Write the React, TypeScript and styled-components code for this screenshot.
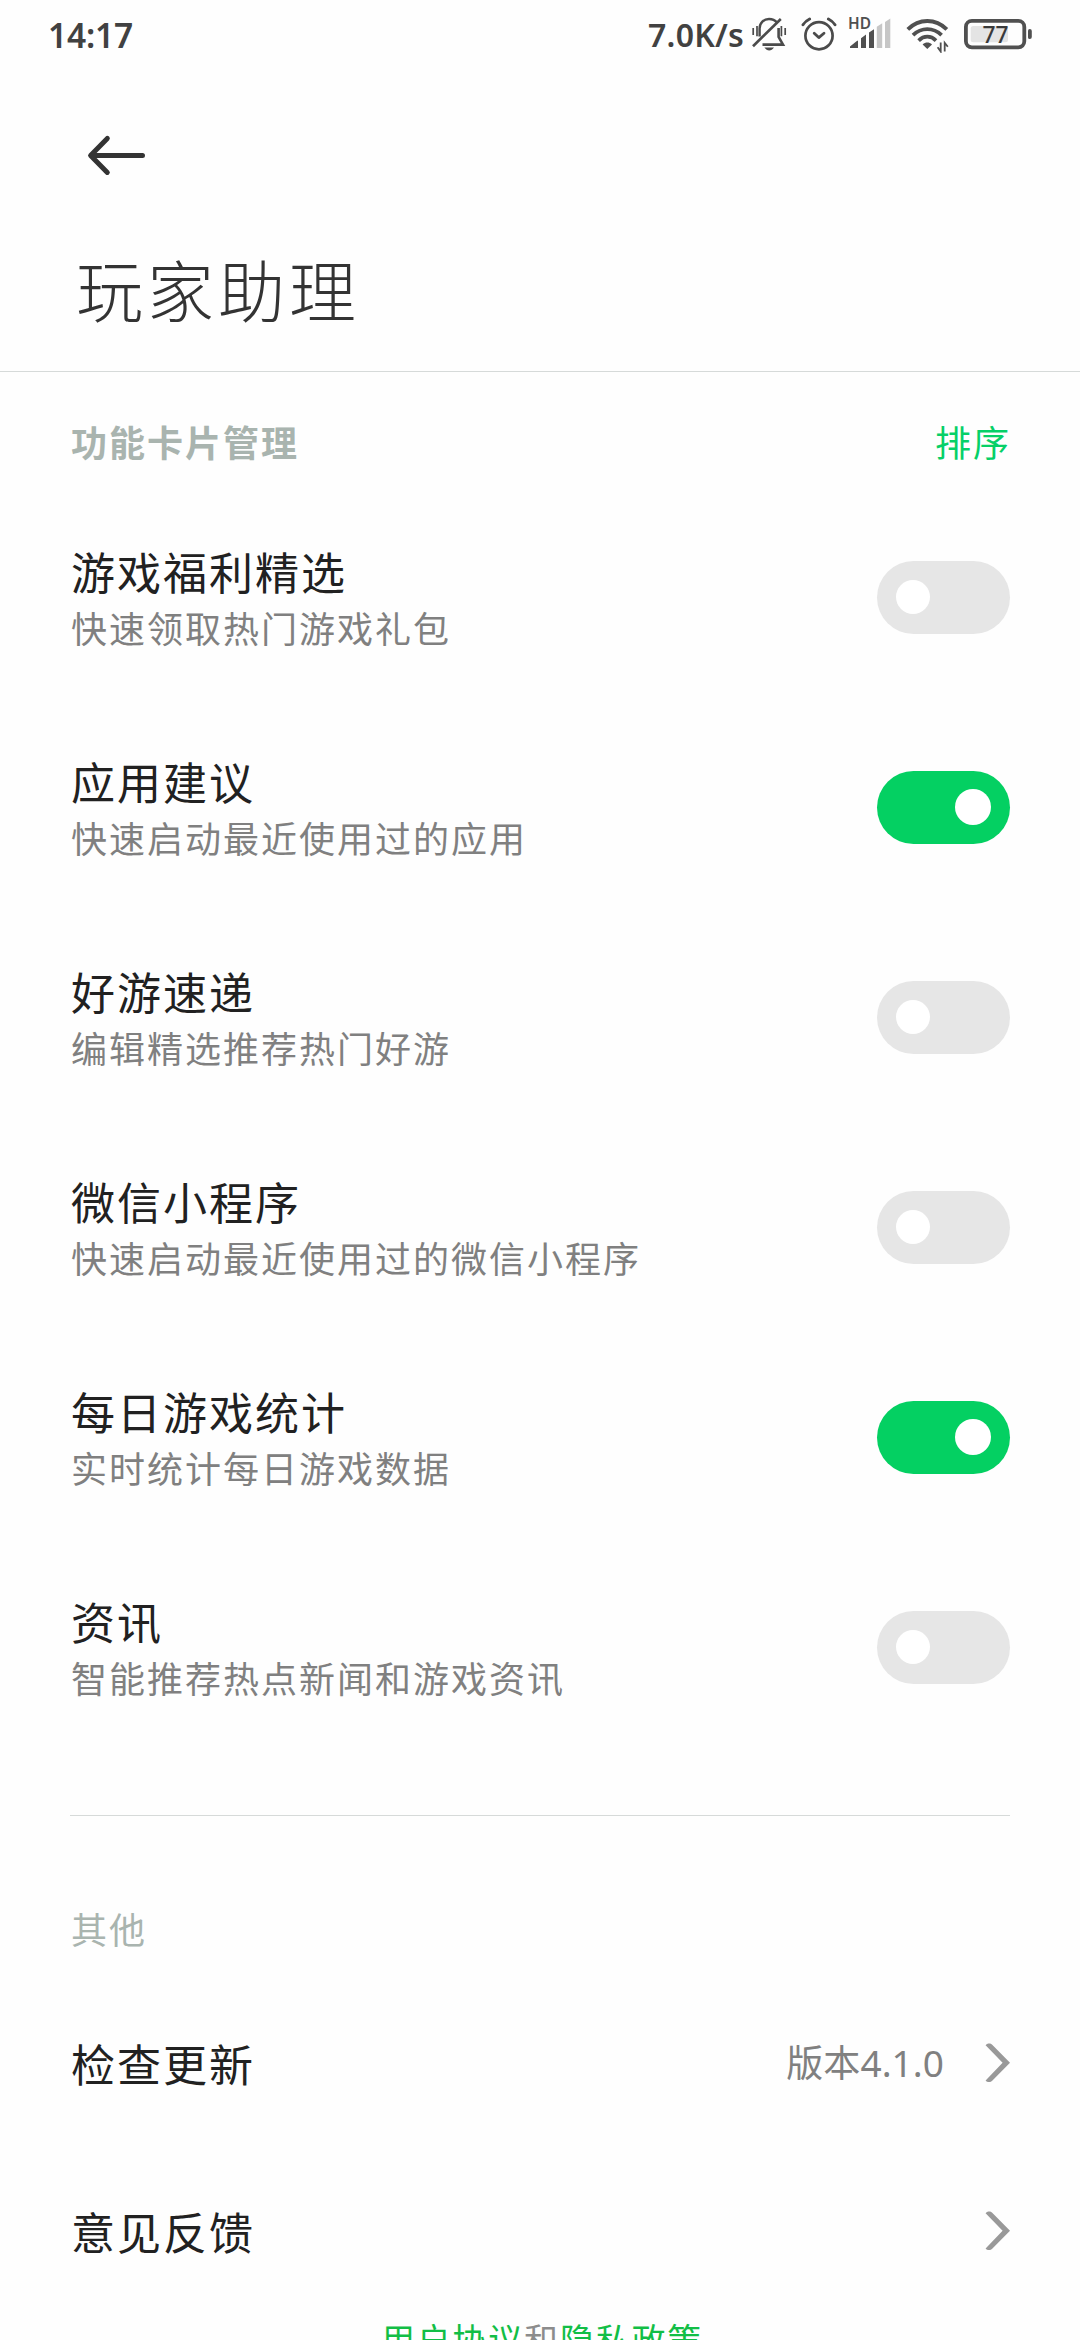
import React, { useState } from "react";
import styled, { createGlobalStyle } from "styled-components";

const GlobalStyle = createGlobalStyle`
  * { box-sizing: border-box; }
  body {
    margin: 0;
    background: #fefefe;
    font-family: "Noto Sans", "Noto Sans CJK SC", sans-serif;
  }
`;

const Screen = styled.div`
  display: flex;
  flex-direction: column;
  width: 1080px;
  height: 2340px;
  overflow: hidden;
  background: #fefefe;

  > * {
    flex: none;
  }
`;

const StatusBar = styled.header`
  display: flex;
  align-items: center;
  justify-content: space-between;
  height: 70px;
  padding: 0 48px 0 48px;
  color: #414141;
`;

const Clock = styled.span`
  padding-bottom: 1px;
  font-size: 33.5px;
  font-weight: 600;
  line-height: 68px;
  letter-spacing: -0.2px;
`;

const StatusRight = styled.div`
  display: flex;
  align-items: center;
`;

const NetSpeed = styled.span`
  margin-right: 7px;
  padding-bottom: 1px;
  font-size: 32px;
  font-weight: 600;
  line-height: 68px;
  letter-spacing: 0.2px;
`;

const StatusIcon = styled.svg<{ $gap?: number }>`
  display: block;
  flex: none;
  margin-right: ${(p) => p.$gap ?? 0}px;
`;

const SvgLabel = styled.text<{ $size: number; $weight: number }>`
  font-family: "Noto Sans", sans-serif;
  font-size: ${(p) => p.$size}px;
  font-weight: ${(p) => p.$weight};
`;

const TitleBar = styled.div`
  display: flex;
  flex-direction: column;
  height: 302px;
  padding: 62px 76px 0;
  border-bottom: 1px solid #d6dad9;
`;

const BackButton = styled.button`
  display: flex;
  width: 80px;
  height: 46px;
  padding: 0 0 0 10px;
  border: 0;
  background: none;
`;

const PageTitle = styled.h1`
  margin: 60px 0 0;
  font-family: "Noto Sans CJK SC", sans-serif;
  font-size: 67px;
  font-weight: 300;
  line-height: 100px;
  letter-spacing: 4px;
  color: #333;
`;

const Section = styled.section`
  display: flex;
  flex-direction: column;
  padding: 0 70px;
`;

const SectionHead = styled.div<{ $height: number; $top: number }>`
  display: flex;
  align-items: center;
  justify-content: space-between;
  height: ${(p) => p.$height}px;
  padding: ${(p) => p.$top}px 0 0 1px;
`;

const SectionLabel = styled.h2<{ $bold?: boolean }>`
  margin: 0;
  font-family: "Noto Sans CJK SC", sans-serif;
  font-size: 36px;
  font-weight: ${(p) => (p.$bold ? 700 : 400)};
  line-height: 54px;
  letter-spacing: 2px;
  color: #a9b4af;
`;

const SortLink = styled.button`
  padding: 0;
  border: 0;
  background: none;
  font-family: "Noto Sans CJK SC", sans-serif;
  font-size: 36px;
  line-height: 54px;
  letter-spacing: 2px;
  margin-right: -1px;
  color: #06d068;
`;

const SettingRow = styled.div`
  display: flex;
  align-items: center;
  justify-content: space-between;
  height: 210px;
  padding-left: 1px;
`;

const RowText = styled.div`
  display: flex;
  flex-direction: column;
  padding-top: 3px;
  font-family: "Noto Sans CJK SC", sans-serif;
`;

const RowTitle = styled.span`
  font-family: "Noto Sans CJK SC", sans-serif;
  font-size: 44px;
  line-height: 56px;
  letter-spacing: 2px;
  color: #212121;
`;

const RowHint = styled.span`
  font-size: 36px;
  line-height: 56px;
  letter-spacing: 2px;
  color: #808080;
`;

const Toggle = styled.button<{ $on: boolean }>`
  display: flex;
  align-items: center;
  justify-content: ${(p) => (p.$on ? "flex-end" : "flex-start")};
  width: 133px;
  height: 73px;
  padding: 0 19px;
  border: 0;
  border-radius: 37px;
  background: ${(p) => (p.$on ? "#04d062" : "#e6e6e6")};
`;

const Knob = styled.span<{ $on: boolean }>`
  width: ${(p) => (p.$on ? 36 : 34)}px;
  height: ${(p) => (p.$on ? 36 : 34)}px;
  border-radius: 50%;
  background: #fff;
`;

const Divider = styled.hr`
  width: 940px;
  height: 1px;
  margin: 63px 0 0;
  border: 0;
  background: #d6dad9;
`;

const LinkRow = styled.div`
  display: flex;
  align-items: center;
  justify-content: space-between;
  height: 168px;
  padding-left: 1px;
`;

const LinkEnd = styled.div`
  display: flex;
  align-items: center;
  gap: 40px;
`;

const Version = styled.span`
  font-size: 37px;
  line-height: 54px;
  letter-spacing: 0.05px;
  color: #808080;
`;

const Footer = styled.footer`
  display: flex;
  justify-content: center;
  padding-left: 4px;
  font-family: "Noto Sans CJK SC", sans-serif;
  font-size: 34px;
  line-height: 48px;
  letter-spacing: 1.8px;
  color: #8c8c8c;
`;

const Policy = styled.a`
  color: #12be46;
`;

const BellOff = () => (
  <StatusIcon width="36" height="36" viewBox="750 17 36 36" fill="none" stroke="#4b4b4b" $gap={14}>
    <path d="M758.6 36.5V28.5C758.6 22.8 762.8 19 768 19C771.4 19 774.2 20.4 776 22.6" strokeWidth="2.4" />
    <path d="M777.6 28V37L782 44.6H761.5" strokeWidth="2.6" />
    <path d="M752 46.2L779.8 19" strokeWidth="2.6" />
    <path d="M752.2 28V35M756 26V36.2M780.4 26V36.2M784.2 28V35" strokeWidth="1.7" />
    <path d="M763.4 47.5H773C771.6 49.6 770 50.4 768.2 50.4C766.4 50.4 764.8 49.6 763.4 47.5Z" fill="#4b4b4b" stroke="none" />
  </StatusIcon>
);

const Alarm = () => (
  <StatusIcon width="36" height="36" viewBox="801 17 36 36" fill="none" stroke="#4b4b4b" strokeLinecap="round" strokeLinejoin="round" $gap={10}>
    <circle cx="819" cy="35.7" r="13.6" strokeWidth="2.7" />
    <path d="M803 24.8C804.6 22.3 806.8 20.4 809.6 19M828.4 19C831.2 20.4 833.4 22.3 835 24.8" strokeWidth="2.9" />
    <path d="M814.2 33.2L818.8 37.6L824 33.2" strokeWidth="2.8" />
  </StatusIcon>
);

const Signal = () => (
  <StatusIcon width="44" height="70" viewBox="847 0 44 70" fill="#505050" $gap={14}>
    <SvgLabel x="848" y="29" textLength="23" lengthAdjust="spacingAndGlyphs" $size={15.5} $weight={600}>
      HD
    </SvgLabel>
    <path d="M850 48V46.6L856.5 41.2L858 40.6V48ZM861 48V38.3L866 34.6V48ZM869 48V32.6L874 29.2V48Z" />
    <path d="M876.8 48V26.7L882.2 23.2V48ZM885 48V22L890.3 18.6V48Z" fill="#c6c6c6" />
  </StatusIcon>
);

const Wifi = () => (
  <StatusIcon width="46" height="36" viewBox="905 17 46 36" fill="none" stroke="#505050" $gap={12}>
    <path d="M907.8 29.4C919 18.2 935.6 18.2 946.8 29.4" strokeWidth="3.9" />
    <path d="M913 35.2C921.4 27.2 933.2 27.2 941.6 35.2" strokeWidth="3.8" />
    <path d="M918.6 40.6C923.8 35.4 930.8 35.4 936 40.6" strokeWidth="3.7" />
    <path d="M922.6 44.4C925.6 41.8 929 41.8 932 44.4L927.3 49Z" fill="#505050" stroke="none" />
    <path d="M940.7 42.5V51.5L937.6 47.2M944.7 51.5V42.8L947.8 46.8" strokeWidth="1.8" />
  </StatusIcon>
);

const Battery = () => (
  <StatusIcon width="69" height="70" viewBox="963 0 69 70" fill="none">
    <rect x="965.9" y="20.9" width="58.4" height="26.4" rx="6" stroke="#505050" strokeWidth="3.8" />
    <rect x="970.7" y="26" width="37.3" height="16.2" rx="2.5" fill="#e4e4e4" />
    <path d="M1028 30.5Q1028 29 1029.8 29Q1031.8 29 1031.8 31V37Q1031.8 39 1029.8 39Q1028 39 1028 37.5Z" fill="#505050" />
    <SvgLabel x="982.6" y="43.2" textLength="26" lengthAdjust="spacingAndGlyphs" fill="#3a3a3a" $size={23} $weight={500}>
      77
    </SvgLabel>
  </StatusIcon>
);

const BackArrow = () => (
  <svg width="62" height="46" viewBox="86 132 62 46" fill="none" stroke="#333" strokeWidth="5" strokeLinecap="round" strokeLinejoin="round">
    <path d="M91 155.4H142.5M107.3 138.4L90.6 155.4L107.3 172.4" />
  </svg>
);

const Chevron = () => (
  <svg width="26" height="40" viewBox="984 2043 26 40" fill="#999">
    <path d="M985.6 2045.2C987 2043.2 990.6 2043 992.2 2044.8L1010 2062.8L992.2 2080.8C990.6 2082.6 987 2082.4 985.6 2080.4L1002.6 2062.8Z" />
  </svg>
);

const initialCards = [
  { title: "游戏福利精选", hint: "快速领取热门游戏礼包", on: false },
  { title: "应用建议", hint: "快速启动最近使用过的应用", on: true },
  { title: "好游速递", hint: "编辑精选推荐热门好游", on: false },
  { title: "微信小程序", hint: "快速启动最近使用过的微信小程序", on: false },
  { title: "每日游戏统计", hint: "实时统计每日游戏数据", on: true },
  { title: "资讯", hint: "智能推荐热点新闻和游戏资讯", on: false },
];

export default function App() {
  const [cards, setCards] = useState(initialCards);
  const flip = (index: number) =>
    setCards(cards.map((card, i) => (i === index ? { ...card, on: !card.on } : card)));

  return (
    <>
      <GlobalStyle />
      <Screen>
        <StatusBar>
          <Clock>14:17</Clock>
          <StatusRight>
            <NetSpeed>7.0K/s</NetSpeed>
            <BellOff />
            <Alarm />
            <Signal />
            <Wifi />
            <Battery />
          </StatusRight>
        </StatusBar>
        <TitleBar>
          <BackButton>
            <BackArrow />
          </BackButton>
          <PageTitle>玩家助理</PageTitle>
        </TitleBar>
        <Section>
          <SectionHead $height={120} $top={17}>
            <SectionLabel $bold>功能卡片管理</SectionLabel>
            <SortLink>排序</SortLink>
          </SectionHead>
          {cards.map((card, index) => (
            <SettingRow key={card.title}>
              <RowText>
                <RowTitle>{card.title}</RowTitle>
                <RowHint>{card.hint}</RowHint>
              </RowText>
              <Toggle $on={card.on} onClick={() => flip(index)}>
                <Knob $on={card.on} />
              </Toggle>
            </SettingRow>
          ))}
          <Divider />
        </Section>
        <Section>
          <SectionHead $height={163} $top={60}>
            <SectionLabel>其他</SectionLabel>
          </SectionHead>
          <LinkRow>
            <RowTitle>检查更新</RowTitle>
            <LinkEnd>
              <Version>版本4.1.0</Version>
              <Chevron />
            </LinkEnd>
          </LinkRow>
          <LinkRow>
            <RowTitle>意见反馈</RowTitle>
            <Chevron />
          </LinkRow>
        </Section>
        <Footer>
          <Policy>用户协议</Policy>和<Policy>隐私政策</Policy>
        </Footer>
      </Screen>
    </>
  );
}
